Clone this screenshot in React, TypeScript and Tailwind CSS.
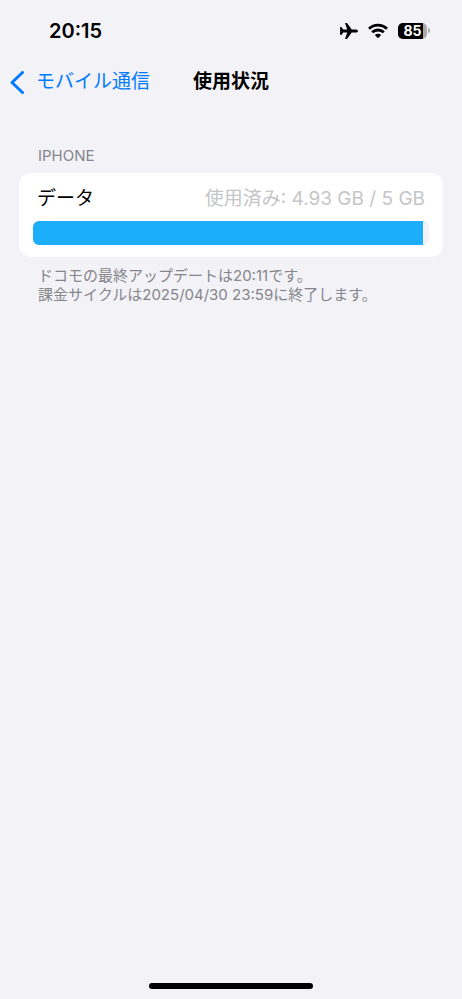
const USED_GB = 4.93;
const TOTAL_GB = 5;

function AirplaneIcon() {
  return (
    <svg className="h-5 w-5" viewBox="0 0 20 20" fill="currentColor" aria-hidden="true">
      <path d="M19 10c0-.9-1.200-1.600-2.800-1.600h-3.500L8.200 2.300c-.2-.2-.4-.3-.7-.3H6.500c-.3 0-.4.3-.3.6l2 5.800H4.200L2.600 6.300c-.1-.2-.3-.3-.5-.3H1.500c-.3 0-.4.2-.4.4V13.600c0 .2.100.4.400.4h.6c.2 0 .4-.1.500-.3l1.600-2.100h4l-2 5.800c-.1.300 0 .6.300.6h1c.3 0 .5-.1.700-.3l4.500-6.100h3.500c1.600 0 2.800-.7 2.800-1.600z" />
    </svg>
  );
}

function WifiIcon() {
  return (
    <svg className="h-4 w-5" viewBox="0 0 20 16" fill="none" stroke="currentColor" strokeWidth="2.8" aria-hidden="true">
      <path d="M1 5.700C3.500 3.400 6.600 2.100 10 2.100s6.500 1.300 9 3.600" />
      <path d="M4.200 9.300C5.800 7.800 7.800 7 10 7s4.200.8 5.800 2.300" />
      <path d="M10 15.200l-3.200-3.200c.9-.8 2-1.200 3.200-1.200s2.300.4 3.200 1.200z" fill="currentColor" stroke="none" />
    </svg>
  );
}

function Battery({ level }: { level: number }) {
  return (
    <div className="flex items-center gap-px" aria-label={`${level}%`}>
      <div className="relative h-4 w-[29px] overflow-hidden rounded-[5px] bg-[#aaaaae]">
        <div className="absolute inset-y-0 left-0 bg-black" style={{ width: `${level}%` }} />
        <span className="relative block text-center text-sm leading-4 font-bold text-white">{level}</span>
      </div>
      <div className="h-[5px] w-[2px] rounded-r-full bg-[#aaaaae]" />
    </div>
  );
}

export default function App() {
  return (
    <div
      lang="ja"
      className="flex min-h-screen flex-col bg-[#f2f2f7] font-['Inter','Noto_Sans_CJK_JP',sans-serif] text-black"
    >
      <div className="flex h-[61px] items-center justify-between pr-8 pl-[49px]">
        <time className="text-xl font-semibold">20:15</time>
        <div className="flex items-center gap-[10px]">
          <div className="flex items-center gap-[9px]">
            <AirplaneIcon />
            <WifiIcon />
          </div>
          <Battery level={85} />
        </div>
      </div>

      <header className="grid h-[43px] grid-cols-[1fr_auto_1fr] items-center px-[10px]">
        <button type="button" className="flex items-center gap-[11px] text-[19px] text-[#007aff]">
          <svg className="h-6 w-[15px]" viewBox="0 0 15 24" fill="none" stroke="currentColor" strokeWidth="3" strokeLinecap="round" strokeLinejoin="round" aria-hidden="true">
            <path d="M12.500 1.500L2 11.500l10.500 10" />
          </svg>
          モバイル通信
        </button>
        <h1 className="text-[19px] font-semibold">使用状況</h1>
      </header>

      <main className="px-[19px] pt-[42px]">
        <h2 className="px-[19px] text-[15px] leading-5 text-[#86868b]">IPHONE</h2>
        <section className="mt-[7px] rounded-xl bg-white px-[14px] pt-3 pb-3">
          <div className="flex items-center justify-between px-1 text-[19px] leading-7">
            <span>データ</span>
            <span className="text-[#c5c5c7]">使用済み: 4.93 GB / 5 GB</span>
          </div>
          <div
            role="progressbar"
            aria-label="データ"
            aria-valuemin={0}
            aria-valuemax={TOTAL_GB}
            aria-valuenow={USED_GB}
            className="mt-2 h-6 overflow-hidden rounded-md bg-[#f2f2f7]"
          >
            <div className="h-full bg-[#1daefb]" style={{ width: `${(USED_GB / TOTAL_GB) * 100}%` }} />
          </div>
        </section>
        <p className="mt-[9px] px-[19px] text-[15px] leading-[19px] text-[#86868b]">
          ドコモの最終アップデートは20:11です。
          <br />
          課金サイクルは2025/04/30 23:59に終了します。
        </p>
      </main>

      <div className="mx-auto mt-auto mb-[10px] h-[6px] w-[164px] rounded-full bg-black" />
    </div>
  );
}
